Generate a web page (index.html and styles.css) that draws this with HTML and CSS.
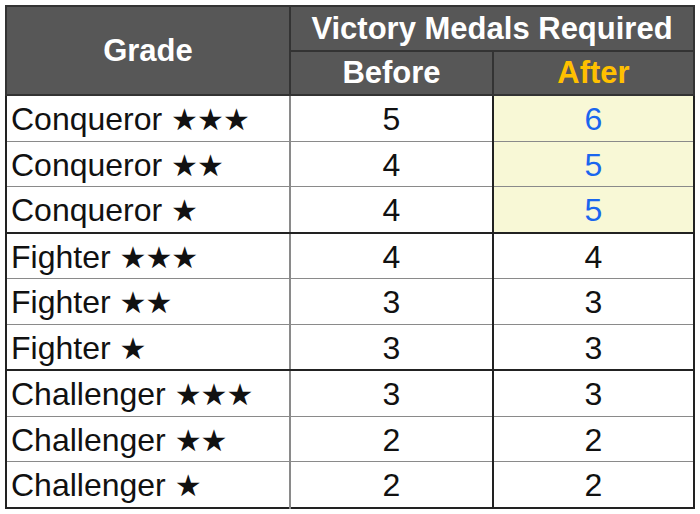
FILE: index.html
```html
<!DOCTYPE html>
<html>
<head>
<meta charset="utf-8">
<link rel="stylesheet" href="styles.css">
</head>
<body>
<table class="medals">
  <colgroup>
    <col class="c-grade">
    <col class="c-before">
    <col class="c-after">
  </colgroup>
  <thead>
    <tr class="h1">
      <th rowspan="2" class="h-grade">Grade</th>
      <th colspan="2" class="h-vmr">Victory Medals Required</th>
    </tr>
    <tr class="h2">
      <th class="h-before">Before</th>
      <th class="h-after">After</th>
    </tr>
  </thead>
  <tbody>
    <tr><td class="grade">Conqueror <span class="stars">★★★</span></td><td class="num">5</td><td class="num after hl">6</td></tr>
    <tr><td class="grade">Conqueror <span class="stars">★★</span></td><td class="num">4</td><td class="num after hl">5</td></tr>
    <tr class="grp-end"><td class="grade">Conqueror <span class="stars">★</span></td><td class="num">4</td><td class="num after hl">5</td></tr>
    <tr><td class="grade">Fighter <span class="stars">★★★</span></td><td class="num">4</td><td class="num after">4</td></tr>
    <tr><td class="grade">Fighter <span class="stars">★★</span></td><td class="num">3</td><td class="num after">3</td></tr>
    <tr class="grp-end"><td class="grade">Fighter <span class="stars">★</span></td><td class="num">3</td><td class="num after">3</td></tr>
    <tr><td class="grade">Challenger <span class="stars">★★★</span></td><td class="num">3</td><td class="num after">3</td></tr>
    <tr><td class="grade">Challenger <span class="stars">★★</span></td><td class="num">2</td><td class="num after">2</td></tr>
    <tr><td class="grade">Challenger <span class="stars">★</span></td><td class="num">2</td><td class="num after">2</td></tr>
  </tbody>
</table>
</body>
</html>
```
FILE: styles.css
```css
html, body {
  margin: 0;
  padding: 0;
  background: #ffffff;
}
body {
  padding: 5px;
}
.medals {
  border-collapse: collapse;
  table-layout: fixed;
  width: 688px;
  font-family: "Liberation Sans", Arial, sans-serif;
  border: 2px solid #222;
}
.c-grade { width: 284px; }
.c-before { width: 203px; }
.c-after { width: 201px; }

.medals th {
  background: #575757;
  color: #ffffff;
  font-weight: bold;
  font-size: 31px;
  border: 2px solid #333;
  padding: 0;
  height: 42.5px;
  text-align: center;
  line-height: 1;
}
.medals .h-after { color: #ffc000; }

.medals td {
  height: 42.5px;
  padding: 2px 0 0 0;
  font-size: 32px;
  color: #111;
  border-top: 1px solid #8a8a8a;
  border-bottom: 1px solid #8a8a8a;
  line-height: 1;
}
.medals td.grade {
  text-align: left;
  padding-left: 4px;
  border-right: 2px solid #8a8a8a;
}
.medals td.num {
  text-align: center;
}
.medals td.after {
  border-left: 2px solid #222;
}
.medals td.hl {
  background: #f8f8d6;
  color: #1a66ee;
}
.medals tr.grp-end td {
  border-bottom: 2px solid #222;
}
.stars {
  font-family: "DejaVu Sans", sans-serif;
  font-size: 30px;
  letter-spacing: -1px;
}
```
